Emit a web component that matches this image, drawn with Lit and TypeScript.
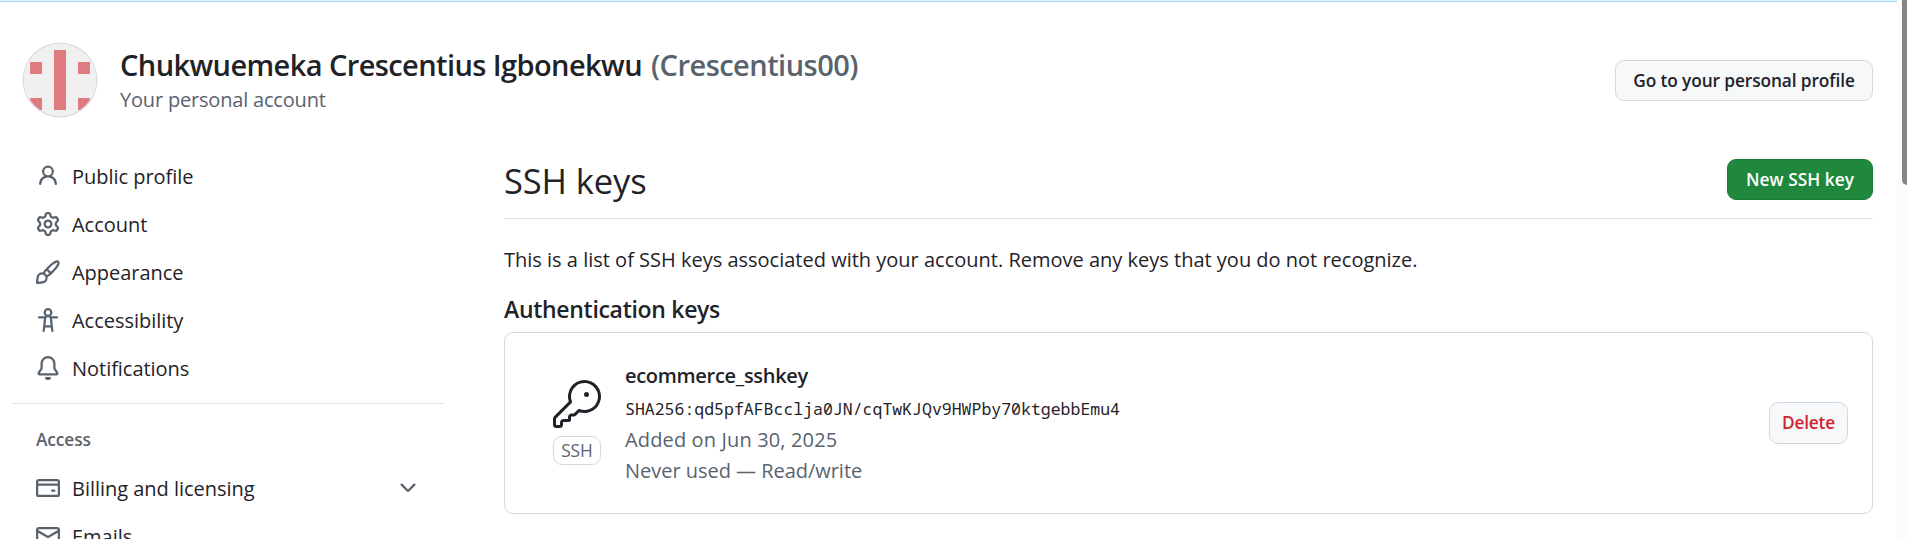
import { LitElement, html, css, svg } from "lit";
import { customElement, property } from "lit/decorators.js";

const ICONS: Record<string, string> = {
  person: "M10.561 8.073a6.005 6.005 0 0 1 3.432 5.142.75.75 0 1 1-1.498.07 4.5 4.5 0 0 0-8.99 0 .75.75 0 0 1-1.498-.07 6.004 6.004 0 0 1 3.431-5.142 3.999 3.999 0 1 1 5.123 0ZM10.5 5a2.5 2.5 0 1 0-5 0 2.5 2.5 0 0 0 5 0Z",
  gear: "M8 0a8.2 8.2 0 0 1 .701.031C9.444.095 9.99.645 10.16 1.29l.288 1.107c.018.066.079.158.212.224.231.114.454.243.668.386.123.082.233.09.299.071l1.103-.303c.644-.176 1.392.021 1.82.63.27.385.506.792.704 1.218.315.675.111 1.422-.364 1.891l-.814.806c-.049.048-.098.147-.088.294.016.257.016.515 0 .772-.01.147.038.246.088.294l.814.806c.475.469.679 1.216.364 1.891a7.977 7.977 0 0 1-.704 1.217c-.428.61-1.176.807-1.82.63l-1.102-.302c-.067-.019-.177-.011-.3.071a5.909 5.909 0 0 1-.668.386c-.133.066-.194.158-.211.224l-.29 1.106c-.168.646-.715 1.196-1.458 1.26a8.006 8.006 0 0 1-1.402 0c-.743-.064-1.289-.614-1.458-1.26l-.289-1.106c-.018-.066-.079-.158-.212-.224a5.738 5.738 0 0 1-.668-.386c-.123-.082-.233-.09-.299-.071l-1.103.303c-.644.176-1.392-.021-1.82-.63a8.12 8.12 0 0 1-.704-1.218c-.315-.675-.111-1.422.363-1.891l.815-.806c.05-.048.098-.147.088-.294a6.214 6.214 0 0 1 0-.772c.01-.147-.038-.246-.088-.294l-.815-.806C.635 6.045.431 5.298.746 4.623a7.92 7.92 0 0 1 .704-1.217c.428-.61 1.176-.807 1.82-.63l1.102.302c.067.019.177.011.3-.071.214-.143.437-.272.668-.386.133-.066.194-.158.211-.224l.29-1.106C6.009.645 6.556.095 7.299.03 7.53.01 7.764 0 8 0Zm-.571 1.525c-.036.003-.108.036-.137.146l-.289 1.105c-.147.561-.549.967-.998 1.189-.173.086-.34.183-.5.29-.417.278-.97.423-1.529.27l-1.103-.303c-.109-.03-.175.016-.195.045-.22.312-.412.644-.573.99-.014.031-.021.11.059.19l.815.806c.411.406.562.957.53 1.456a4.709 4.709 0 0 0 0 .582c.032.499-.119 1.05-.53 1.456l-.815.806c-.081.08-.073.159-.059.19.162.346.353.677.573.989.02.03.085.076.195.046l1.102-.303c.56-.153 1.113-.008 1.53.27.161.107.328.204.501.29.447.222.85.629.997 1.189l.289 1.105c.029.109.101.143.137.146a6.6 6.6 0 0 0 1.142 0c.036-.003.108-.036.137-.146l.289-1.105c.147-.561.549-.967.998-1.189.173-.086.34-.183.5-.29.417-.278.97-.423 1.529-.27l1.103.303c.109.029.175-.016.195-.045.22-.313.411-.644.573-.99.014-.031.021-.11-.059-.19l-.815-.806c-.411-.406-.562-.957-.53-1.456a4.709 4.709 0 0 0 0-.582c-.032-.499.119-1.05.53-1.456l.815-.806c.081-.08.073-.159.059-.19a6.464 6.464 0 0 0-.573-.989c-.02-.03-.085-.076-.195-.046l-1.102.303c-.56.153-1.113.008-1.53-.27a4.44 4.44 0 0 0-.501-.29c-.447-.222-.85-.629-.997-1.189l-.289-1.105c-.029-.11-.101-.143-.137-.146a6.6 6.6 0 0 0-1.142 0ZM11 8a3 3 0 1 1-6 0 3 3 0 0 1 6 0ZM9.5 8a1.5 1.5 0 1 0-3.001.001A1.5 1.5 0 0 0 9.5 8Z",
  brush: "M11.134 1.535c.7-.509 1.416-.942 2.076-1.155.649-.21 1.463-.267 2.069.34.603.601.568 1.411.368 2.07-.202.668-.624 1.39-1.125 2.096-1.011 1.424-2.496 2.987-3.775 4.249-1.098 1.084-2.132 1.839-3.04 2.3a3.744 3.744 0 0 1-1.055 3.217c-.431.431-1.065.691-1.657.861-.614.177-1.294.287-1.914.357A21.151 21.151 0 0 1 .797 16H.743l.007-.75H.749L.742 16a.75.75 0 0 1-.743-.742l.743-.008-.742.007v-.054a21.25 21.25 0 0 1 .13-2.284c.067-.647.187-1.287.358-1.914.17-.591.43-1.226.86-1.657a3.746 3.746 0 0 1 3.227-1.054c.466-.893 1.225-1.907 2.314-2.982 1.271-1.255 2.833-2.75 4.245-3.777ZM1.62 13.089c-.051.464-.086.929-.104 1.395.466-.018.932-.053 1.396-.104a10.511 10.511 0 0 0 1.668-.309c.526-.151.856-.325 1.011-.48a2.25 2.25 0 1 0-3.182-3.182c-.155.155-.329.485-.48 1.01a10.515 10.515 0 0 0-.309 1.67Zm10.396-10.34c-1.224.89-2.605 2.189-3.822 3.384l1.718 1.718c1.21-1.205 2.51-2.597 3.387-3.833.47-.662.78-1.227.912-1.662.134-.444.032-.551.009-.575h-.001V1.78c-.014-.014-.113-.113-.548.027-.432.14-.995.462-1.655.942Zm-4.832 7.266-.001.001a9.859 9.859 0 0 0 1.63-1.142L7.155 7.216a9.7 9.7 0 0 0-1.161 1.607c.482.302.889.71 1.19 1.192Z",
  accessibility: "M9.923 5.302c.063.063.122.129.178.198H14A.75.75 0 0 1 14 7h-3.3l.578 5.163.362 2.997a.75.75 0 0 1-1.49.18L9.868 13H6.132l-.282 2.34a.75.75 0 0 1-1.49-.18l.362-2.997L5.3 7H2a.75.75 0 0 1 0-1.5h3.9a2.54 2.54 0 0 1 .176-.198 3 3 0 1 1 3.847 0ZM9.2 7.073h-.001a1.206 1.206 0 0 0-2.398 0L6.305 11.5h3.39ZM9.5 3a1.5 1.5 0 1 0-3.001.001A1.5 1.5 0 0 0 9.5 3Z",
  bell: "M8 16a2 2 0 0 0 1.985-1.75c.017-.137-.097-.25-.235-.25h-3.5c-.138 0-.252.113-.235.25A2 2 0 0 0 8 16ZM3 5a5 5 0 0 1 10 0v2.947c0 .05.015.098.042.139l1.703 2.555A1.519 1.519 0 0 1 13.482 13H2.518a1.516 1.516 0 0 1-1.263-2.36l1.703-2.554A.255.255 0 0 0 3 7.947Zm5-3.5A3.5 3.5 0 0 0 4.5 5v2.947c0 .346-.102.683-.294.97l-1.703 2.556a.017.017 0 0 0-.003.01l.001.006c0 .002.002.004.004.006l.006.004.007.001h10.964l.007-.001.006-.004.004-.006.001-.007a.017.017 0 0 0-.003-.01l-1.703-2.554a1.745 1.745 0 0 1-.294-.97V5A3.5 3.5 0 0 0 8 1.5Z",
  card: "M10.75 9a.75.75 0 0 0 0 1.5h1.5a.75.75 0 0 0 0-1.5h-1.5Z M0 3.75C0 2.784.784 2 1.75 2h12.5c.966 0 1.75.784 1.75 1.75v8.5A1.75 1.75 0 0 1 14.25 14H1.75A1.75 1.75 0 0 1 0 12.25ZM14.5 6.5h-13v5.75c0 .138.112.25.25.25h12.5a.25.25 0 0 0 .25-.25Zm0-2.75a.25.25 0 0 0-.25-.25H1.75a.25.25 0 0 0-.25.25V5h13Z",
  mail: "M1.75 2h12.5c.966 0 1.75.784 1.75 1.75v8.5A1.75 1.75 0 0 1 14.25 14H1.75A1.75 1.75 0 0 1 0 12.25v-8.5C0 2.784.784 2 1.75 2ZM1.5 12.251c0 .138.112.25.25.25h12.5a.25.25 0 0 0 .25-.25V5.809L8.38 9.397a.75.75 0 0 1-.76 0L1.5 5.809v6.442Zm13-8.181v-.32a.25.25 0 0 0-.25-.25H1.75a.25.25 0 0 0-.25.25v.32L8 7.88Z",
  chevron: "M12.78 5.22a.749.749 0 0 1 0 1.06l-4.25 4.25a.749.749 0 0 1-1.06 0L3.22 6.28a.749.749 0 1 1 1.06-1.06L8 8.939l3.72-3.719a.749.749 0 0 1 1.06 0Z",
  key: "M16.75 8.5a1.25 1.25 0 1 0 0-2.5 1.25 1.25 0 0 0 0 2.5Z M15.75 0a8.25 8.25 0 1 1-2.541 16.101l-1.636 1.636a1.744 1.744 0 0 1-1.237.513H9.25a.25.25 0 0 0-.25.25v1.448a.876.876 0 0 1-.256.619l-.214.213a.75.75 0 0 1-.545.22H5.25a.25.25 0 0 0-.25.25v1A1.75 1.75 0 0 1 3.25 24h-1.5A1.75 1.75 0 0 1 0 22.25v-2.836c0-.464.185-.908.513-1.236l7.386-7.388A8.249 8.249 0 0 1 15.75 0ZM9 8.25a6.733 6.733 0 0 0 .463 2.462.75.75 0 0 1-.168.804l-7.722 7.721a.25.25 0 0 0-.073.177v2.836c0 .138.112.25.25.25h1.5a.25.25 0 0 0 .25-.25v-1c0-.966.784-1.75 1.75-1.75H7.5v-1c0-.966.784-1.75 1.75-1.75h1.086a.25.25 0 0 0 .177-.073l1.971-1.972a.75.75 0 0 1 .804-.168A6.75 6.75 0 1 0 9 8.25Z",
};

@customElement("oct-icon")
class OctIcon extends LitElement {
  @property() name = "";
  @property({ type: Number }) grid = 16;
  static styles = css`
    :host { display: block; width: 24px; height: 24px; flex: none; }
    svg { display: block; width: 100%; height: 100%; fill: currentColor; }
  `;
  render() {
    return html`<svg viewBox="0 0 ${this.grid} ${this.grid}">${svg`<path d=${ICONS[this.name] ?? ""}></path>`}</svg>`;
  }
}

@customElement("nav-item")
class NavItem extends LitElement {
  @property() icon = "";
  @property() label = "";
  @property({ type: Boolean }) expandable = false;
  static styles = css`
    :host { display: flex; align-items: center; height: 48px; padding: 0 24px; color: #1f2328; }
    .icon { color: #59636e; }
    .label { flex: 1; margin-left: 12px; white-space: nowrap; }
  `;
  render() {
    return html`
      <oct-icon class="icon" name=${this.icon}></oct-icon>
      <span class="label">${this.label}</span>
      ${this.expandable ? html`<oct-icon class="icon" name="chevron"></oct-icon>` : null}
    `;
  }
}

@customElement("app-root")
class AppRoot extends LitElement {
  static styles = css`
    :host {
      display: flex; height: 539px; overflow: hidden; background: #fff; color: #1f2328;
      font: 400 20px "Open Sans", "Noto Sans", sans-serif;
    }
    .page { flex: 1; min-width: 0; }
    .strip { height: 1px; background: #ddf4ff; border-bottom: 1px solid #a0d6fb; }
    .header { display: flex; align-items: center; height: 72px; padding: 42px 24px 36px; }
    .avatar { width: 72px; height: 72px; border-radius: 50%; box-shadow: 0 0 0 1.5px #dcdddf; overflow: hidden; }
    .avatar svg { display: block; }
    .who { flex: 1; margin-left: 24px; white-space: nowrap; }
    .semi { font-weight: 600; }
    .name { font-size: 29px; line-height: 38px; letter-spacing: -0.586px; }
    .login { color: #59636e; letter-spacing: -0.53px; margin-left: 2px; }
    .sub { line-height: 32px; margin-bottom: -2px; color: #59636e; letter-spacing: -0.19px; }
    .btn {
      box-sizing: border-box; height: 41px; display: flex; align-items: center; justify-content: center;
      border: 1px solid #d1d9e0; border-radius: 9px; background: #f6f8fa; font-size: 17.3px;
      letter-spacing: -0.12px; white-space: nowrap;
    }
    .profile { width: 258px; letter-spacing: -0.1px; }
    .create { width: 146px; background: #1f883d; border-color: #1c7c38; color: #fff; letter-spacing: 0.03px; }
    .delete { width: 79px; height: 42px; padding-bottom: 1px; color: #d1242f; letter-spacing: -0.2px; }
    .body { display: flex; }
    .nav { width: 432px; margin-left: 12px; letter-spacing: -0.03px; }
    .rule { height: 1px; background: #dfe3e8; margin-top: 11px; }
    .group { height: 60px; box-sizing: border-box; padding: 23px 24px 0; font-size: 17.3px; line-height: 26px; color: #59636e; letter-spacing: -0.09px; }
    .main { flex: 1; min-width: 0; margin: 7px 24px 0 60px; }
    .head { display: flex; justify-content: space-between; height: 59px; border-bottom: 1px solid #dfe3e8; }
    h2 { margin: 0; font-size: 34.5px; font-weight: 400; line-height: 44px; letter-spacing: -0.12px; }
    p { margin: 25px 0 0; line-height: 32px; white-space: nowrap; }
    h3 { margin: 15px 0 0; font-size: 23px; line-height: 36px; letter-spacing: -0.301px; }
    .card {
      box-sizing: border-box; display: flex; align-items: flex-start; height: 182px; margin-top: 5px;
      padding: 26px 24px 0 48px; border: 1px solid #d1d9e0; border-radius: 9px;
    }
    .kind { width: 48px; margin: 21px 24px 0 0; }
    .key { width: 48px; height: 48px; }
    .badge {
      box-sizing: border-box; height: 29px; margin-top: 8px; border: 1px solid #d1d9e0; border-radius: 9px;
      display: flex; align-items: center; justify-content: center; font-size: 17.3px; color: #59636e;
    }
    .info { flex: 1; white-space: nowrap; }
    .title { margin-top: 1px; line-height: 32px; letter-spacing: -0.3px; }
    .hash { margin-top: 1px; font: 400 16.5px/31px "Noto Sans Mono", "DejaVu Sans Mono", monospace; }
    .muted { margin-top: 1px; color: #59636e; line-height: 30px; letter-spacing: 0.14px; }
    .last { margin-top: 0; line-height: 32px; letter-spacing: -0.03px; }
    .card .delete { margin-top: 43px; }
    .track { width: 10px; background: #fcfcfc; display: flex; justify-content: flex-end; }
    .thumb { width: 5px; height: 185px; background: #858585; border-radius: 0 0 0 5px; }
  `;
  render() {
    return html`
      <div class="page">
        <div class="strip"></div>
        <div class="header">
          <div class="avatar">
            <svg width="72" height="72" viewBox="0 0 72 72">
              <rect width="72" height="72" fill="#f0f0f0"></rect>
              <path fill="#df7a81" d="M30 6h12v60H30zM6 18h12v12H6zM54 18h12v12H54zM6 54h12v12H6zM54 54h12v12H54z"></path>
            </svg>
          </div>
          <div class="who">
            <div class="name semi">Chukwuemeka Crescentius Igbonekwu <span class="login">(Crescentius00)</span></div>
            <div class="sub">Your personal account</div>
          </div>
          <div class="btn semi profile">Go to your personal profile</div>
        </div>
        <div class="body">
          <div class="nav">
            <nav-item icon="person" label="Public profile"></nav-item>
            <nav-item icon="gear" label="Account"></nav-item>
            <nav-item icon="brush" label="Appearance"></nav-item>
            <nav-item icon="accessibility" label="Accessibility"></nav-item>
            <nav-item icon="bell" label="Notifications"></nav-item>
            <div class="rule"></div>
            <div class="group semi">Access</div>
            <nav-item icon="card" label="Billing and licensing" expandable></nav-item>
            <nav-item icon="mail" label="Emails"></nav-item>
          </div>
          <div class="main">
            <div class="head"><h2>SSH keys</h2><div class="btn semi create">New SSH key</div></div>
            <p>This is a list of SSH keys associated with your account. Remove any keys that you do not recognize.</p>
            <h3 class="semi">Authentication keys</h3>
            <div class="card">
              <div class="kind"><oct-icon class="key" name="key" grid="24"></oct-icon><div class="badge">SSH</div></div>
              <div class="info">
                <div class="title semi">ecommerce_sshkey</div>
                <div class="hash">SHA256:qd5pfAFBcclja0JN/cqTwKJQv9HWPby70ktgebbEmu4</div>
                <div class="muted">Added on Jun 30, 2025</div>
                <div class="muted last">Never used — Read/write</div>
              </div>
              <div class="btn semi delete">Delete</div>
            </div>
          </div>
        </div>
      </div>
      <div class="track"><div class="thumb"></div></div>
    `;
  }
}
